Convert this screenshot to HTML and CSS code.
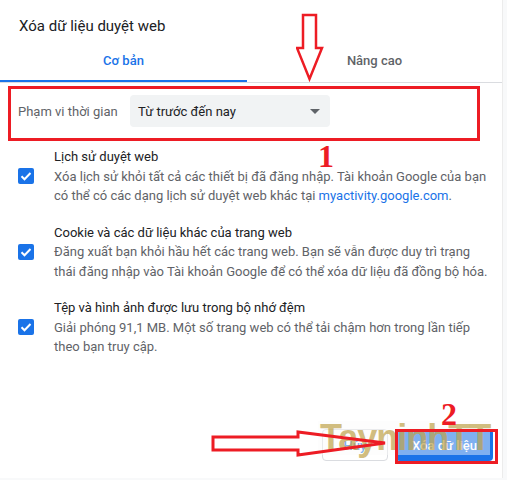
FILE: index.html
```html
<!DOCTYPE html>
<html lang="vi">
<head>
    <meta charset="UTF-8">
    <meta name="viewport" content="width=device-width, initial-scale=1.0">
    <title>Xóa dữ liệu duyệt web</title>

    <link rel="stylesheet" href="styles.css">
</head>
<body>
    <div class="dialog">
        <h1 class="dialog-title">Xóa dữ liệu duyệt web</h1>

        <div class="tabs">
            <div class="tab active">Cơ bản</div>
            <div class="tab">Nâng cao</div>
        </div>

        <div class="content">
            <div class="range-row">
                <span class="range-label">Phạm vi thời gian</span>
                <div class="select">
                    <span>Từ trước đến nay</span>
                    <span class="select-arrow"></span>
                </div>
            </div>

            <div class="option">
                <span class="checkbox">
                    <svg viewBox="0 0 16 16" width="16" height="16"><path d="M3.5 8.2l3 3 6-6.2" fill="none" stroke="#fff" stroke-width="2"/></svg>
                </span>
                <div class="option-text">
                    <div class="option-title">Lịch sử duyệt web</div>
                    <div class="option-desc">Xóa lịch sử khỏi tất cả các thiết bị đã đăng nhập. Tài khoản Google của bạn có thể có các dạng lịch sử duyệt web khác tại <a href="#" class="link">myactivity.google.com</a>.</div>
                </div>
            </div>

            <div class="option">
                <span class="checkbox">
                    <svg viewBox="0 0 16 16" width="16" height="16"><path d="M3.5 8.2l3 3 6-6.2" fill="none" stroke="#fff" stroke-width="2"/></svg>
                </span>
                <div class="option-text">
                    <div class="option-title">Cookie và các dữ liệu khác của trang web</div>
                    <div class="option-desc">Đăng xuất bạn khỏi hầu hết các trang web. Bạn sẽ vẫn được duy trì trạng thái đăng nhập vào Tài khoản Google để có thể xóa dữ liệu đã đồng bộ hóa.</div>
                </div>
            </div>

            <div class="option">
                <span class="checkbox">
                    <svg viewBox="0 0 16 16" width="16" height="16"><path d="M3.5 8.2l3 3 6-6.2" fill="none" stroke="#fff" stroke-width="2"/></svg>
                </span>
                <div class="option-text">
                    <div class="option-title">Tệp và hình ảnh được lưu trong bộ nhớ đệm</div>
                    <div class="option-desc">Giải phóng 91,1 MB. Một số trang web có thể tải chậm hơn trong lần tiếp theo bạn truy cập.</div>
                </div>
            </div>
        </div>

        <div class="actions">
            <button class="btn cancel-btn">Hủy</button>
            <button class="btn clear-btn">Xóa dữ liệu</button>
        </div>
    </div>

    <!-- annotations drawn over the screenshot -->
    <div class="watermark">TayninhTT</div>
    <div class="mark-box range-box"></div>
    <div class="mark-box clear-box"></div>
    <div class="mark-num num-1">1</div>
    <div class="mark-num num-2">2</div>

    <svg class="arrow-down" width="30" height="70" viewBox="0 0 30 70">
        <path d="M7 2 H20 V35 H26 L13.5 66 L1 35 H7 Z" fill="none" stroke="#ed1c24" stroke-width="2.5"/>
    </svg>
    <svg class="arrow-right" width="180" height="30" viewBox="0 0 180 30">
        <path d="M2 7 H87 V2 L174 13 L87 25 V20 H2 Z" fill="none" stroke="#ed1c24" stroke-width="3" stroke-linejoin="miter"/>
    </svg>
</body>
</html>
```

FILE: styles.css
```css
body {
    margin: 0;
    padding: 0;
    font-family: Roboto, "Liberation Sans", Arial, sans-serif;
    background-color: #f8f9fa;
    color: #202124;
}

.dialog {
    width: 502px;
    height: 478px;
    background-color: #fff;
    border-right: 1px solid #ececec;
    display: flex;
    flex-direction: column;
}

.dialog-title {
    margin: 0;
    padding: 16px 0 0 19px;
    font-size: 15px;
    font-weight: 400;
    line-height: 20px;
    color: #202124;
}

.tabs {
    display: flex;
    margin-top: 6px;
    border-bottom: 1px solid #dadce0;
}

.tab {
    flex: 1;
    height: 40px;
    line-height: 38px;
    text-align: center;
    font-size: 13px;
    font-weight: 500;
    color: #5f6368;
    box-sizing: border-box;
}

.tab.active {
    flex: 0 0 247px;
    color: #1a73e8;
    border-bottom: 2px solid #1a73e8;
}

.content {
    padding: 12px 6px 0 18px;
}

.range-row {
    display: flex;
    align-items: center;
    height: 32px;
}

.range-label {
    width: 112px;
    font-size: 13px;
    color: #5f6368;
}

.select {
    width: 200px;
    height: 32px;
    box-sizing: border-box;
    padding: 0 10px 0 8px;
    background-color: #f1f3f4;
    border-radius: 4px;
    display: flex;
    align-items: center;
    justify-content: space-between;
    font-size: 13px;
    color: #202124;
}

.select-arrow {
    width: 0;
    height: 0;
    border-left: 5px solid transparent;
    border-right: 5px solid transparent;
    border-top: 5px solid #5f6368;
}

.option {
    display: flex;
    align-items: center;
    margin-top: 20px;
}

.option + .option {
    margin-top: 17px;
}

.checkbox {
    flex: 0 0 16px;
    width: 16px;
    height: 16px;
    border-radius: 2px;
    background-color: #1a73e8;
    margin-right: 20px;
    display: flex;
}

.option-text {
    max-width: 434px;
    font-size: 13px;
    line-height: 19.5px;
}

.option-title {
    color: #202124;
}

.option-desc {
    color: #5f6368;
}

.link {
    color: #1a73e8;
    text-decoration: none;
}

.actions {
    margin-top: auto;
    display: flex;
    justify-content: flex-end;
    gap: 8px;
    padding: 0 9px 17px 0;
}

.btn {
    height: 32px;
    border-radius: 4px;
    font-family: Roboto, "Liberation Sans", Arial, sans-serif;
    font-size: 13px;
    font-weight: 500;
    padding: 0 15px;
    cursor: pointer;
}

.cancel-btn {
    width: 66px;
    background-color: #fff;
    border: 1px solid #dadce0;
    color: #1a73e8;
}

.clear-btn {
    width: 97px;
    background-color: #1a73e8;
    border: none;
    color: #fff;
}

/* annotations */
.watermark {
    position: absolute;
    left: 318px;
    top: 421px;
    width: 172px;
    height: 34px;
    padding-left: 2px;
    box-sizing: border-box;
    background-color: rgba(250, 250, 250, 0.45);
    font-family: "Liberation Sans", Arial, sans-serif;
    font-weight: 700;
    font-size: 36px;
    line-height: 34px;
    letter-spacing: -1px;
    color: rgba(190, 160, 70, 0.7);
    white-space: nowrap;
}

.mark-box {
    position: absolute;
    border: 3px solid #ed1c24;
}

.range-box {
    left: 8px;
    top: 86px;
    width: 466px;
    height: 49px;
}

.clear-box {
    left: 395px;
    top: 429px;
    width: 97px;
    height: 29px;
}

.mark-num {
    position: absolute;
    font-family: "Liberation Serif", "Times New Roman", serif;
    font-weight: 700;
    font-size: 32px;
    line-height: 32px;
    color: #ed1c24;
}

.num-1 {
    left: 318px;
    top: 140px;
}

.num-2 {
    left: 441px;
    top: 398px;
}

.arrow-down {
    position: absolute;
    left: 296px;
    top: 13px;
}

.arrow-right {
    position: absolute;
    left: 211px;
    top: 430px;
}
```
